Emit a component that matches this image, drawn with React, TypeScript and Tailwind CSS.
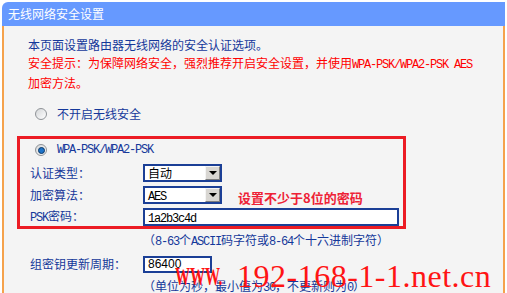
import React from "react";

const MONO = "font-['Liberation_Mono','Noto_Sans_CJK_SC',monospace] text-[12px] tracking-[-1.2px]";

function M({ children }: { children: React.ReactNode }) {
  return <span className={MONO}>{children}</span>;
}

function Radio({ checked }: { checked?: boolean }) {
  return (
    <span className="w-[12px] h-[12px] rounded-full border border-[#8f9397] bg-gradient-to-br from-[#d4d6d8] to-[#ffffff] flex items-center justify-center shrink-0">
      {checked && (
        <span className="w-[7px] h-[7px] rounded-full bg-[#1e74c9] border border-[#0b3563]" />
      )}
    </span>
  );
}

function Select({ value }: { value: React.ReactNode }) {
  return (
    <div className="w-[79px] h-[18px] border-2 border-[#1b3f96] bg-white flex items-stretch">
      <div className="flex-1 pl-[3px] leading-[14px] text-black">{value}</div>
      <div className="w-[15px] bg-[#d8d6d2] border border-[#f4f4f4] border-r-[#7d7d7d] border-b-[#7d7d7d] flex items-center justify-center">
        <span className="w-0 h-0 border-l-[4px] border-r-[4px] border-t-[4px] border-l-transparent border-r-transparent border-t-black" />
      </div>
    </div>
  );
}

function Row({ label, children, pad }: { label: React.ReactNode; children: React.ReactNode; pad: string }) {
  return (
    <div className={`flex items-center h-[18px] ${pad}`}>
      <div className="w-[113px] leading-[18px]">{label}</div>
      {children}
    </div>
  );
}

export default function App() {
  return (
    <div className="w-[507px] h-[293px] bg-white overflow-hidden pt-[2px] pl-[2px] font-['Noto_Sans_CJK_SC',sans-serif] text-[12px] text-[#14389a]">
      <div className="w-[503px]">
        <div className="h-[24px] bg-[#6699ff] rounded-tl-[6px] text-white text-[12px] pl-[6px] flex items-center">
          无线网络安全设置
        </div>
        <div className="relative h-[267px] bg-[#f4f4f4] border-l-2 border-r-2 border-[#f5a24c] pt-[10px]">
          <div className="pl-[24px] leading-[18px]">
            <div>本页面设置路由器无线网络的安全认证选项。</div>
            <div className="text-[#ff0000]">
              安全提示：为保障网络安全，强烈推荐开启安全设置，并使用<M>WPA-PSK/WPA2-PSK AES</M>
            </div>
            <div className="text-[#ff0000]">加密方法。</div>
          </div>

          <div className="mt-[13px] h-[18px] pl-[31px] flex items-center gap-[10px]">
            <Radio />
            <span className="leading-[18px]">不开启无线安全</span>
          </div>

          <div className="mt-[13px] ml-[13px] w-[389px] h-[93px] border-[3px] border-[#ec1c24] pt-[2px]">
            <div className="h-[18px] pl-[15px] flex items-center gap-[10px]">
              <Radio checked />
              <M>WPA-PSK/WPA2-PSK</M>
            </div>
            <div className="mt-[5px] flex flex-col gap-[4px]">
              <Row label="认证类型：" pad="pl-[10px]">
                <Select value="自动" />
              </Row>
              <Row label="加密算法：" pad="pl-[10px]">
                <Select value={<M>AES</M>} />
              </Row>
              <Row
                label={
                  <>
                    <M>PSK</M>密码：
                  </>
                }
                pad="pl-[10px]"
              >
                <div className="w-[256px] h-[18px] border-2 border-[#1b3f96] bg-white pl-[3px] leading-[14px] text-black">
                  <M>1a2b3c4d</M>
                </div>
              </Row>
            </div>
          </div>

          <div className="mt-[2px] pl-[139px] leading-[18px]">
            （<M>8-63</M>个<M>ASCII</M>码字符或<M>8-64</M>个十六进制字符）
          </div>
          <div className="mt-[4px]">
            <Row label="组密钥更新周期：" pad="pl-[26px]">
              <div className="w-[69px] h-[17px] border-2 border-[#1b3f96] bg-white pl-[3px] leading-[13px] text-black font-['Liberation_Sans',sans-serif] text-[12px]">
                86400
              </div>
            </Row>
          </div>
          <div className="mt-[4px] pl-[139px] leading-[18px]">
            （单位为秒，最小值为<M>30</M>，不更新则为<M>0</M>）
          </div>

          <div className="absolute left-[234px] top-[164px] text-[13px] leading-[16px] font-bold text-[#ee2236] whitespace-nowrap">
            设置不少于8位的密码
          </div>

          <div className="absolute left-[171px] top-[235px] origin-left scale-x-[0.6] font-['Liberation_Serif',serif] font-bold text-[25px] leading-[32px] text-[#ff1414] whitespace-nowrap">
            WWW.
          </div>
          <div className="absolute left-[233px] top-[234px] font-['Liberation_Serif',serif] text-[32px] tracking-[0.5px] leading-[32px] text-[#ff1414] whitespace-nowrap">
            192-168-1-1.net.cn
          </div>
        </div>
      </div>
    </div>
  );
}
